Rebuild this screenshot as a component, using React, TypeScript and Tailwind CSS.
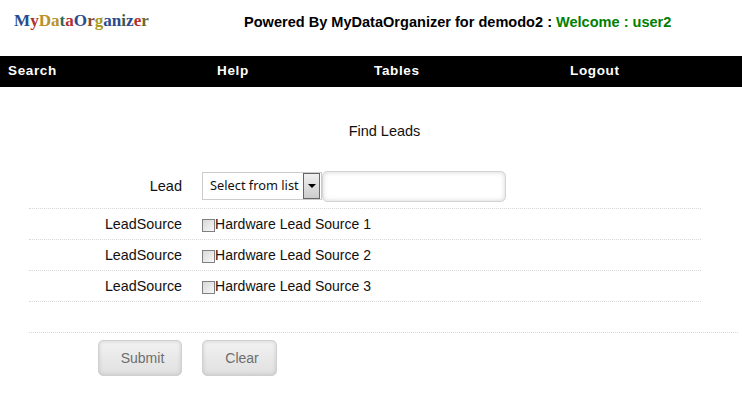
const logo: [string, string][] = [
  ["M", "text-[#2a4b8d]"],
  ["y", "text-[#b03030]"],
  ["D", "text-[#b8922a]"],
  ["a", "text-[#b8922a]"],
  ["t", "text-[#2a6a5a]"],
  ["a", "text-[#b03030]"],
  ["O", "text-[#2a4b8d]"],
  ["r", "text-[#8a4a30]"],
  ["g", "text-[#a89a20]"],
  ["a", "text-[#2a4b8d]"],
  ["n", "text-[#2a4b8d]"],
  ["i", "text-[#3a5a3a]"],
  ["z", "text-[#2a4b8d]"],
  ["e", "text-[#b03030]"],
  ["r", "text-[#6b6a2a]"],
];

function SourceRow({ label }: { label: string }) {
  return (
    <div className="flex h-[31px] items-center border-b border-dotted border-[#d8d8d8]">
      <div className="w-[153px] pt-0.5 text-right text-[14.3px]">LeadSource</div>
      <div className="ml-5 flex items-center">
        <span className="mt-0.5 block h-[13px] w-[13px] border border-[#808080] bg-gradient-to-br from-[#d8d8d8] to-[#f8f8f8]" />
        <span className="text-[14px] tracking-[0.02px]">{label}</span>
      </div>
    </div>
  );
}

export default function App() {
  return (
    <div className="h-[411px] w-[742px] overflow-hidden bg-white font-['Liberation_Sans',sans-serif] text-[14.5px] text-[#111]">
      <header className="flex h-14 items-start">
        <div className="ml-[14px] mt-[10px] w-[230px] font-['Liberation_Serif',serif] text-[17.1px] font-bold leading-[22px]">
          {logo.map(([t, c], i) => (
            <span key={i} className={c}>{t}</span>
          ))}
        </div>
        <div className="mt-3 whitespace-nowrap text-[14.55px] font-bold leading-[20px] text-black">
          Powered By MyDataOrganizer for demodo2 : <span className="text-[#008000]">Welcome : user2</span>
        </div>
      </header>

      <nav className="flex h-[31px] items-center bg-black text-[13.5px] font-bold tracking-[0.65px] text-white">
        <span className="ml-2 w-[209px]">Search</span>
        <span className="w-[157px]">Help</span>
        <span className="w-[196px]">Tables</span>
        <span>Logout</span>
      </nav>

      <h1 className="mt-9 w-[769px] text-center text-[14.5px] leading-4">Find Leads</h1>

      <form className="ml-[29px] mt-[25px]">
        <div className="w-[672px]">
          <div className="flex h-[45px] items-center border-b border-dotted border-[#d8d8d8]">
            <div className="w-[153px] pt-0.5 text-right">Lead</div>
            <div className="ml-5 flex items-center">
              <div className="flex h-[28px] w-[120px] items-center justify-between border border-[#ccc] pl-[7px] pr-px font-['Noto_Sans',sans-serif] text-[12.8px]">
                <span>Select from list</span>
                <span className="flex h-[26px] w-[17px] items-center justify-center border border-[#666] bg-gradient-to-b from-[#f0f0f0] to-[#ccc]">
                  <span className="h-0 w-0 border-x-[4px] border-t-[4px] border-x-transparent border-t-black" />
                </span>
              </div>
              <input className="h-[31px] w-[184px] rounded-[5px] border border-[#d4d4d4] shadow-[inset_0_0_5px_rgba(0,0,0,0.18)]" />
            </div>
          </div>
          <SourceRow label="Hardware Lead Source 1" />
          <SourceRow label="Hardware Lead Source 2" />
          <SourceRow label="Hardware Lead Source 3" />
        </div>

        <div className="mt-[30px] w-[709px] border-t border-dotted border-[#d8d8d8]" />

        <div className="ml-[69px] mt-[7px] flex gap-5">
          <button type="button" className="h-9 w-[84px] rounded-[5px] border border-[#d0d0d0] bg-gradient-to-b from-[#f2f2f2] to-[#e0e0e0] pl-[5px] text-[14px] text-[#6e6e6e] shadow-[inset_0_0_4px_rgba(0,0,0,0.14)]">
            Submit
          </button>
          <button type="button" className="h-9 w-[75px] rounded-[5px] border border-[#d0d0d0] bg-gradient-to-b from-[#f2f2f2] to-[#e0e0e0] pl-[5px] text-[14px] text-[#6e6e6e] shadow-[inset_0_0_4px_rgba(0,0,0,0.14)]">
            Clear
          </button>
        </div>
      </form>
    </div>
  );
}
